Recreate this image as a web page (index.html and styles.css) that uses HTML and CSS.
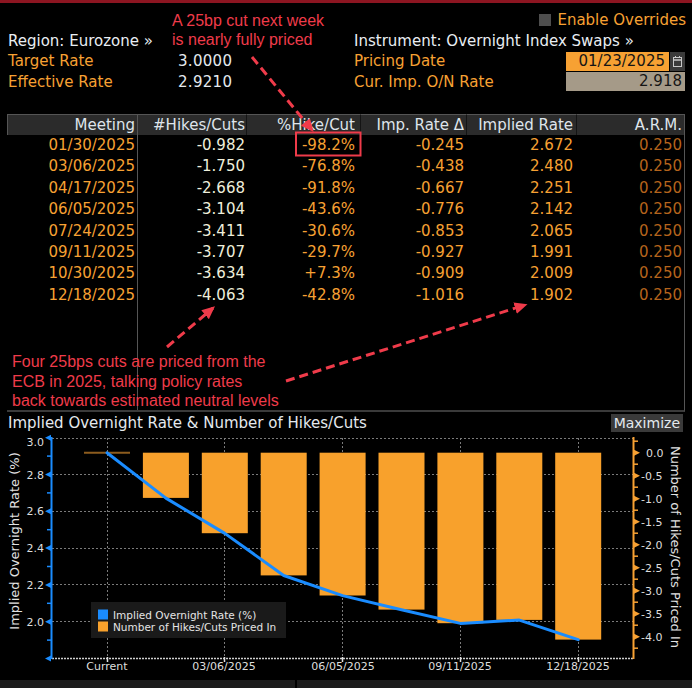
FILE: index.html
```html
<!DOCTYPE html>
<html>
<head>
<meta charset="utf-8">
<link rel="stylesheet" href="styles.css">
</head>
<body>
<div class="strip"></div>
<div class="top">
  <div class="blank"></div>
  <div class="overrides"><span class="checkbox"></span><span>Enable Overrides</span></div>
  <div class="span-left white">Region: Eurozone »</div>
  <div class="span-right white">Instrument: Overnight Index Swaps »</div>
  <div class="lbl">Target Rate</div>
  <div class="val">3.0000</div>
  <div class="lbl">Pricing Date</div>
  <div class="datebox"><span class="date">01/23/2025</span><span class="cal"><svg width="15" height="19" viewBox="0 0 15 19"><rect x="3.5" y="5.5" width="8" height="9" fill="none" stroke="#c8c8c8" stroke-width="1"/><line x1="3.5" y1="8" x2="11.5" y2="8" stroke="#c8c8c8" stroke-width="1.5"/><line x1="5.5" y1="4" x2="5.5" y2="6" stroke="#c8c8c8"/><line x1="9.5" y1="4" x2="9.5" y2="6" stroke="#c8c8c8"/></svg></span></div>
  <div class="lbl">Effective Rate</div>
  <div class="val">2.9210</div>
  <div class="lbl">Cur. Imp. O/N Rate</div>
  <div class="onbox">2.918</div>
</div>

<div class="tbl">
  <div class="col c1">
    <div class="th">Meeting</div>
    <div class="td or">01/30/2025</div>
    <div class="td or">03/06/2025</div>
    <div class="td or">04/17/2025</div>
    <div class="td or">06/05/2025</div>
    <div class="td or">07/24/2025</div>
    <div class="td or">09/11/2025</div>
    <div class="td or">10/30/2025</div>
    <div class="td or">12/18/2025</div>
  </div>
  <div class="col c2">
    <div class="th">#Hikes/Cuts</div>
    <div class="td wy">-0.982</div>
    <div class="td wy">-1.750</div>
    <div class="td wy">-2.668</div>
    <div class="td wy">-3.104</div>
    <div class="td wy">-3.411</div>
    <div class="td wy">-3.707</div>
    <div class="td wy">-3.634</div>
    <div class="td wy">-4.063</div>
  </div>
  <div class="col c3">
    <div class="th">%Hike/Cut</div>
    <div class="td or">-98.2%</div>
    <div class="td or">-76.8%</div>
    <div class="td or">-91.8%</div>
    <div class="td or">-43.6%</div>
    <div class="td or">-30.6%</div>
    <div class="td or">-29.7%</div>
    <div class="td or">+7.3%</div>
    <div class="td or">-42.8%</div>
  </div>
  <div class="col c4">
    <div class="th">Imp. Rate Δ</div>
    <div class="td or">-0.245</div>
    <div class="td or">-0.438</div>
    <div class="td or">-0.667</div>
    <div class="td or">-0.776</div>
    <div class="td or">-0.853</div>
    <div class="td or">-0.927</div>
    <div class="td or">-0.909</div>
    <div class="td or">-1.016</div>
  </div>
  <div class="col c5">
    <div class="th">Implied Rate</div>
    <div class="td or">2.672</div>
    <div class="td or">2.480</div>
    <div class="td or">2.251</div>
    <div class="td or">2.142</div>
    <div class="td or">2.065</div>
    <div class="td or">1.991</div>
    <div class="td or">2.009</div>
    <div class="td or">1.902</div>
  </div>
  <div class="col c6">
    <div class="th">A.R.M.</div>
    <div class="td br">0.250</div>
    <div class="td br">0.250</div>
    <div class="td br">0.250</div>
    <div class="td br">0.250</div>
    <div class="td br">0.250</div>
    <div class="td br">0.250</div>
    <div class="td br">0.250</div>
    <div class="td br">0.250</div>
  </div>
</div>

<div class="chart-head">
  <div class="chart-title">Implied Overnight Rate &amp; Number of Hikes/Cuts</div>
  <div class="maxbtn">Maximize</div>
</div>

<svg class="chart" width="692" height="246" viewBox="0 434 692 246">
  <g class="grid" stroke="#7a7a7a" stroke-width="1" stroke-dasharray="2 2" fill="none">
    <line x1="52" y1="438.5" x2="633" y2="438.5"/>
    <line x1="52" y1="474.5" x2="633" y2="474.5"/>
    <line x1="52" y1="511.5" x2="633" y2="511.5"/>
    <line x1="52" y1="548.5" x2="633" y2="548.5"/>
    <line x1="52" y1="584.5" x2="633" y2="584.5"/>
    <line x1="52" y1="621.5" x2="633" y2="621.5"/>
    <line x1="107.5" y1="438" x2="107.5" y2="658"/>
    <line x1="224.5" y1="438" x2="224.5" y2="658"/>
    <line x1="342.5" y1="438" x2="342.5" y2="658"/>
    <line x1="460.5" y1="438" x2="460.5" y2="658"/>
    <line x1="578.5" y1="438" x2="578.5" y2="658"/>
  </g>
  <g fill="#f8a12c">
    <rect x="142.9" y="452.7" width="46" height="45.2"/>
    <rect x="201.8" y="452.7" width="46" height="80.5"/>
    <rect x="260.7" y="452.7" width="46" height="122.7"/>
    <rect x="319.6" y="452.7" width="46" height="142.8"/>
    <rect x="378.5" y="452.7" width="46" height="156.9"/>
    <rect x="437.4" y="452.7" width="46" height="170.5"/>
    <rect x="496.3" y="452.7" width="46" height="167.2"/>
    <rect x="555.2" y="452.7" width="46" height="186.9"/>
  </g>
  <line x1="84" y1="452.7" x2="130" y2="452.7" stroke="#8d5c1e" stroke-width="2"/>
  <polyline fill="none" stroke="#1a8cff" stroke-width="3" stroke-linejoin="round" stroke-linecap="round"
    points="107,452.8 165.9,498.1 224.8,533.4 283.7,575.5 342.6,595.6 401.5,609.7 460.4,623.4 519.3,620.1 578.2,639.7"/>

  <!-- bottom axis -->
  <line x1="52" y1="658.5" x2="633" y2="658.5" stroke="#cfcfcf" stroke-width="1.5" stroke-dasharray="2 1"/>
  <g stroke="#e0e0e0" stroke-width="1.5">
    <line x1="107.5" y1="657" x2="107.5" y2="662"/>
    <line x1="224.5" y1="657" x2="224.5" y2="662"/>
    <line x1="342.5" y1="657" x2="342.5" y2="662"/>
    <line x1="460.5" y1="657" x2="460.5" y2="662"/>
    <line x1="578.5" y1="657" x2="578.5" y2="662"/>
  </g>
  <g class="xl" font-size="11" fill="#dedede" text-anchor="middle">
    <text x="107" y="670">Current</text>
    <text x="224" y="670">03/06/2025</text>
    <text x="343" y="670">06/05/2025</text>
    <text x="460" y="670">09/11/2025</text>
    <text x="578" y="670">12/18/2025</text>
  </g>

  <!-- left axis -->
  <line x1="51.5" y1="437" x2="51.5" y2="659" stroke="#1a8cff" stroke-width="2"/>
  <g fill="#1a8cff">
    <polygon points="51,434.7 45,437.7 51,440.7"/>
    <polygon points="51,471.5 45,474.5 51,477.5"/>
    <polygon points="51,508.3 45,511.3 51,514.3"/>
    <polygon points="51,545.1 45,548.1 51,551.1"/>
    <polygon points="51,581.9 45,584.9 51,587.9"/>
    <polygon points="51,618.7 45,621.7 51,624.7"/>
    <polygon points="51,655.5 45,658.5 51,661.5"/>
  </g>
  <g stroke="#1a8cff" stroke-width="1.5">
    <line x1="47" y1="456.1" x2="51" y2="456.1"/>
    <line x1="47" y1="492.9" x2="51" y2="492.9"/>
    <line x1="47" y1="529.7" x2="51" y2="529.7"/>
    <line x1="47" y1="566.5" x2="51" y2="566.5"/>
    <line x1="47" y1="603.3" x2="51" y2="603.3"/>
    <line x1="47" y1="640.1" x2="51" y2="640.1"/>
  </g>
  <g font-size="11" fill="#dedede" text-anchor="end">
    <text x="44" y="445.5">3.0</text>
    <text x="44" y="478.5">2.8</text>
    <text x="44" y="515.3">2.6</text>
    <text x="44" y="552.1">2.4</text>
    <text x="44" y="588.9">2.2</text>
    <text x="44" y="625.7">2.0</text>
  </g>
  <text transform="translate(14,541) rotate(-90)" dy="0.35em" font-size="13" fill="#e2e2e2" text-anchor="middle">Implied Overnight Rate (%)</text>

  <!-- right axis -->
  <line x1="633.5" y1="437" x2="633.5" y2="659" stroke="#f7a133" stroke-width="2"/>
  <g fill="#f7a133">
    <polygon points="634,449.7 640,452.7 634,455.7"/>
    <polygon points="634,472.7 640,475.7 634,478.7"/>
    <polygon points="634,495.7 640,498.7 634,501.7"/>
    <polygon points="634,518.7 640,521.7 634,524.7"/>
    <polygon points="634,541.7 640,544.7 634,547.7"/>
    <polygon points="634,564.7 640,567.7 634,570.7"/>
    <polygon points="634,587.7 640,590.7 634,593.7"/>
    <polygon points="634,610.7 640,613.7 634,616.7"/>
    <polygon points="634,633.7 640,636.7 634,639.7"/>
  </g>
  <g stroke="#f7a133" stroke-width="1.5">
    <line x1="634" y1="441.2" x2="638" y2="441.2"/>
    <line x1="634" y1="464.2" x2="638" y2="464.2"/>
    <line x1="634" y1="487.2" x2="638" y2="487.2"/>
    <line x1="634" y1="510.2" x2="638" y2="510.2"/>
    <line x1="634" y1="533.2" x2="638" y2="533.2"/>
    <line x1="634" y1="556.2" x2="638" y2="556.2"/>
    <line x1="634" y1="579.2" x2="638" y2="579.2"/>
    <line x1="634" y1="602.2" x2="638" y2="602.2"/>
    <line x1="634" y1="625.2" x2="638" y2="625.2"/>
    <line x1="634" y1="648.2" x2="638" y2="648.2"/>
  </g>
  <g font-size="11" fill="#dedede">
    <text x="646" y="456.7">0.0</text>
    <text x="641" y="479.7">-0.5</text>
    <text x="641" y="502.7">-1.0</text>
    <text x="641" y="525.7">-1.5</text>
    <text x="641" y="548.7">-2.0</text>
    <text x="641" y="571.7">-2.5</text>
    <text x="641" y="594.7">-3.0</text>
    <text x="641" y="617.7">-3.5</text>
    <text x="641" y="640.7">-4.0</text>
  </g>
  <text transform="translate(676,547) rotate(90)" dy="0.35em" font-size="13" fill="#e2e2e2" text-anchor="middle">Number of Hikes/Cuts Priced In</text>

  <!-- legend -->
  <rect x="91" y="602" width="195" height="36" fill="#1a1a1a"/>
  <rect x="98" y="609.5" width="10" height="10" fill="#1a8cff"/>
  <rect x="98" y="621.5" width="10" height="10" fill="#f8a12c"/>
  <g font-size="10.5" fill="#e4e4e4">
    <text x="113" y="618.5">Implied Overnight Rate (%)</text>
    <text x="113" y="631">Number of Hikes/Cuts Priced In</text>
  </g>
</svg>

<div class="footer"><div class="f1"></div><div class="f2"></div></div>

<svg class="annot" width="692" height="688" viewBox="0 0 692 688">
  <defs>
    <marker id="ah" viewBox="0 0 10 10" refX="8" refY="5" markerWidth="13" markerHeight="13" markerUnits="userSpaceOnUse" orient="auto">
      <path d="M0,0.5 L10,5 L0,9.5 z" fill="#ef3b4a"/>
    </marker>
  </defs>
  <rect x="296" y="132.5" width="64.5" height="23" fill="none" stroke="#ef3b4a" stroke-width="2"/>
  <g stroke="#ef3b4a" stroke-width="3" stroke-dasharray="9 5" fill="none">
    <line x1="252" y1="57" x2="312" y2="130" marker-end="url(#ah)"/>
    <line x1="167" y1="347" x2="213" y2="308" marker-end="url(#ah)"/>
    <line x1="286" y1="381" x2="525" y2="305" marker-end="url(#ah)"/>
  </g>
</svg>
<div class="note note1">A 25bp cut next week<br>is nearly fully priced</div>
<div class="note note2">Four 25bps cuts are priced from the<br>ECB in 2025, talking policy rates<br>back towards estimated neutral levels</div>
</body>
</html>
```

FILE: styles.css
```css
* { box-sizing: border-box; margin: 0; padding: 0; }
html, body { background: #000; }
body {
  width: 692px;
  height: 688px;
  overflow: hidden;
  position: relative;
  font-family: "DejaVu Sans", sans-serif;
  font-size: 15px;
  color: #e9eef3;
}
.strip { height: 3px; background: #8c1521; }

.top {
  display: grid;
  grid-template-columns: 170px 176px 212px 120px;
  grid-auto-rows: 20.5px;
  align-items: center;
  padding: 7px 0 0 8px;
  line-height: 20px;
  white-space: nowrap;
}
.blank { grid-column: 1 / 3; }
.overrides {
  grid-column: 3 / 5;
  display: flex;
  justify-content: flex-end;
  align-items: center;
  gap: 6px;
  color: #f7a133;
}
.checkbox { width: 12px; height: 12px; background: #4e4e4e; }
.span-left { grid-column: 1 / 3; }
.span-right { grid-column: 3 / 5; }
.white { color: #e9eef3; }
.lbl { color: #f7a133; }
.val { color: #e4e9ee; letter-spacing: 0.3px; }
.datebox { display: flex; height: 19px; width: 119px; gap: 1px; }
.date {
  width: 103px;
  background: #f7a133;
  color: #151515;
  text-align: right;
  padding-right: 4px;
  line-height: 19px;
}
.cal { width: 15px; background: #3b3b3b; display: block; }
.cal svg { display: block; }
.onbox {
  width: 119px;
  height: 19px;
  background: #a59a88;
  color: #151515;
  text-align: right;
  padding-right: 3px;
  line-height: 19px;
}

.tbl {
  display: flex;
  margin: 22px 0 0 7px;
  width: 678px;
  height: 298px;
  border-right: 1px solid #555;
  border-bottom: 2px solid #3a3a3a;
}
.col { display: flex; flex-direction: column; }
.c1 { width: 131px; border-right: 1px solid #555; }
.c2 { width: 108px; }
.c3 { width: 114px; }
.c4 { width: 106px; }
.c5 { width: 110px; }
.c6 { width: 108px; }
.th {
  height: 21px;
  background: #2b2b2b;
  border-top: 1px solid #555;
  color: #dfe5eb;
  text-align: right;
  line-height: 20px;
  padding-right: 2px;
  white-space: nowrap;
}
.c1 .th { border-left: 1px solid #555; }
.c3 .th, .c4 .th, .c5 .th, .c6 .th { border-left: 1px solid #141414; }
.td {
  height: 21.4px;
  line-height: 21.4px;
  text-align: right;
  padding-right: 2px;
  white-space: nowrap;
}
.c2 .th, .c2 .td { padding-right: 1px; }
.c3 .th, .c3 .td { padding-right: 5px; }
.c5 .th, .c5 .td { padding-right: 3px; }
.c6 .th, .c6 .td { padding-right: 2px; }
.or { color: #f7a133; }
.wy { color: #efefdc; }
.br { color: #b5641c; }

.chart-head {
  height: 22px;
  display: flex;
  justify-content: space-between;
  align-items: center;
  padding: 0 9px 0 8px;
}
.chart-title { color: #e4e9ee; }
.maxbtn {
  background: #3a3a3a;
  color: #e4e9ee;
  font-size: 14px;
  height: 18px;
  line-height: 18px;
  padding: 0 3px;
}
.chart { display: block; font-family: "DejaVu Sans", sans-serif; }

.footer { display: flex; height: 8px; }
.f1 { width: 295px; background: #1c1c1c; }
.f2 { flex: 1; margin-left: 2px; background: #1c1c1c; }

.annot { position: absolute; left: 0; top: 0; pointer-events: none; }
.note {
  position: absolute;
  font-family: "Liberation Sans", Arial, sans-serif;
  font-size: 16px;
  color: #ef3b4a;
  white-space: nowrap;
}
.note1 { left: 172px; top: 11px; line-height: 19px; }
.note2 { left: 12px; top: 352px; line-height: 19.5px; }
```
